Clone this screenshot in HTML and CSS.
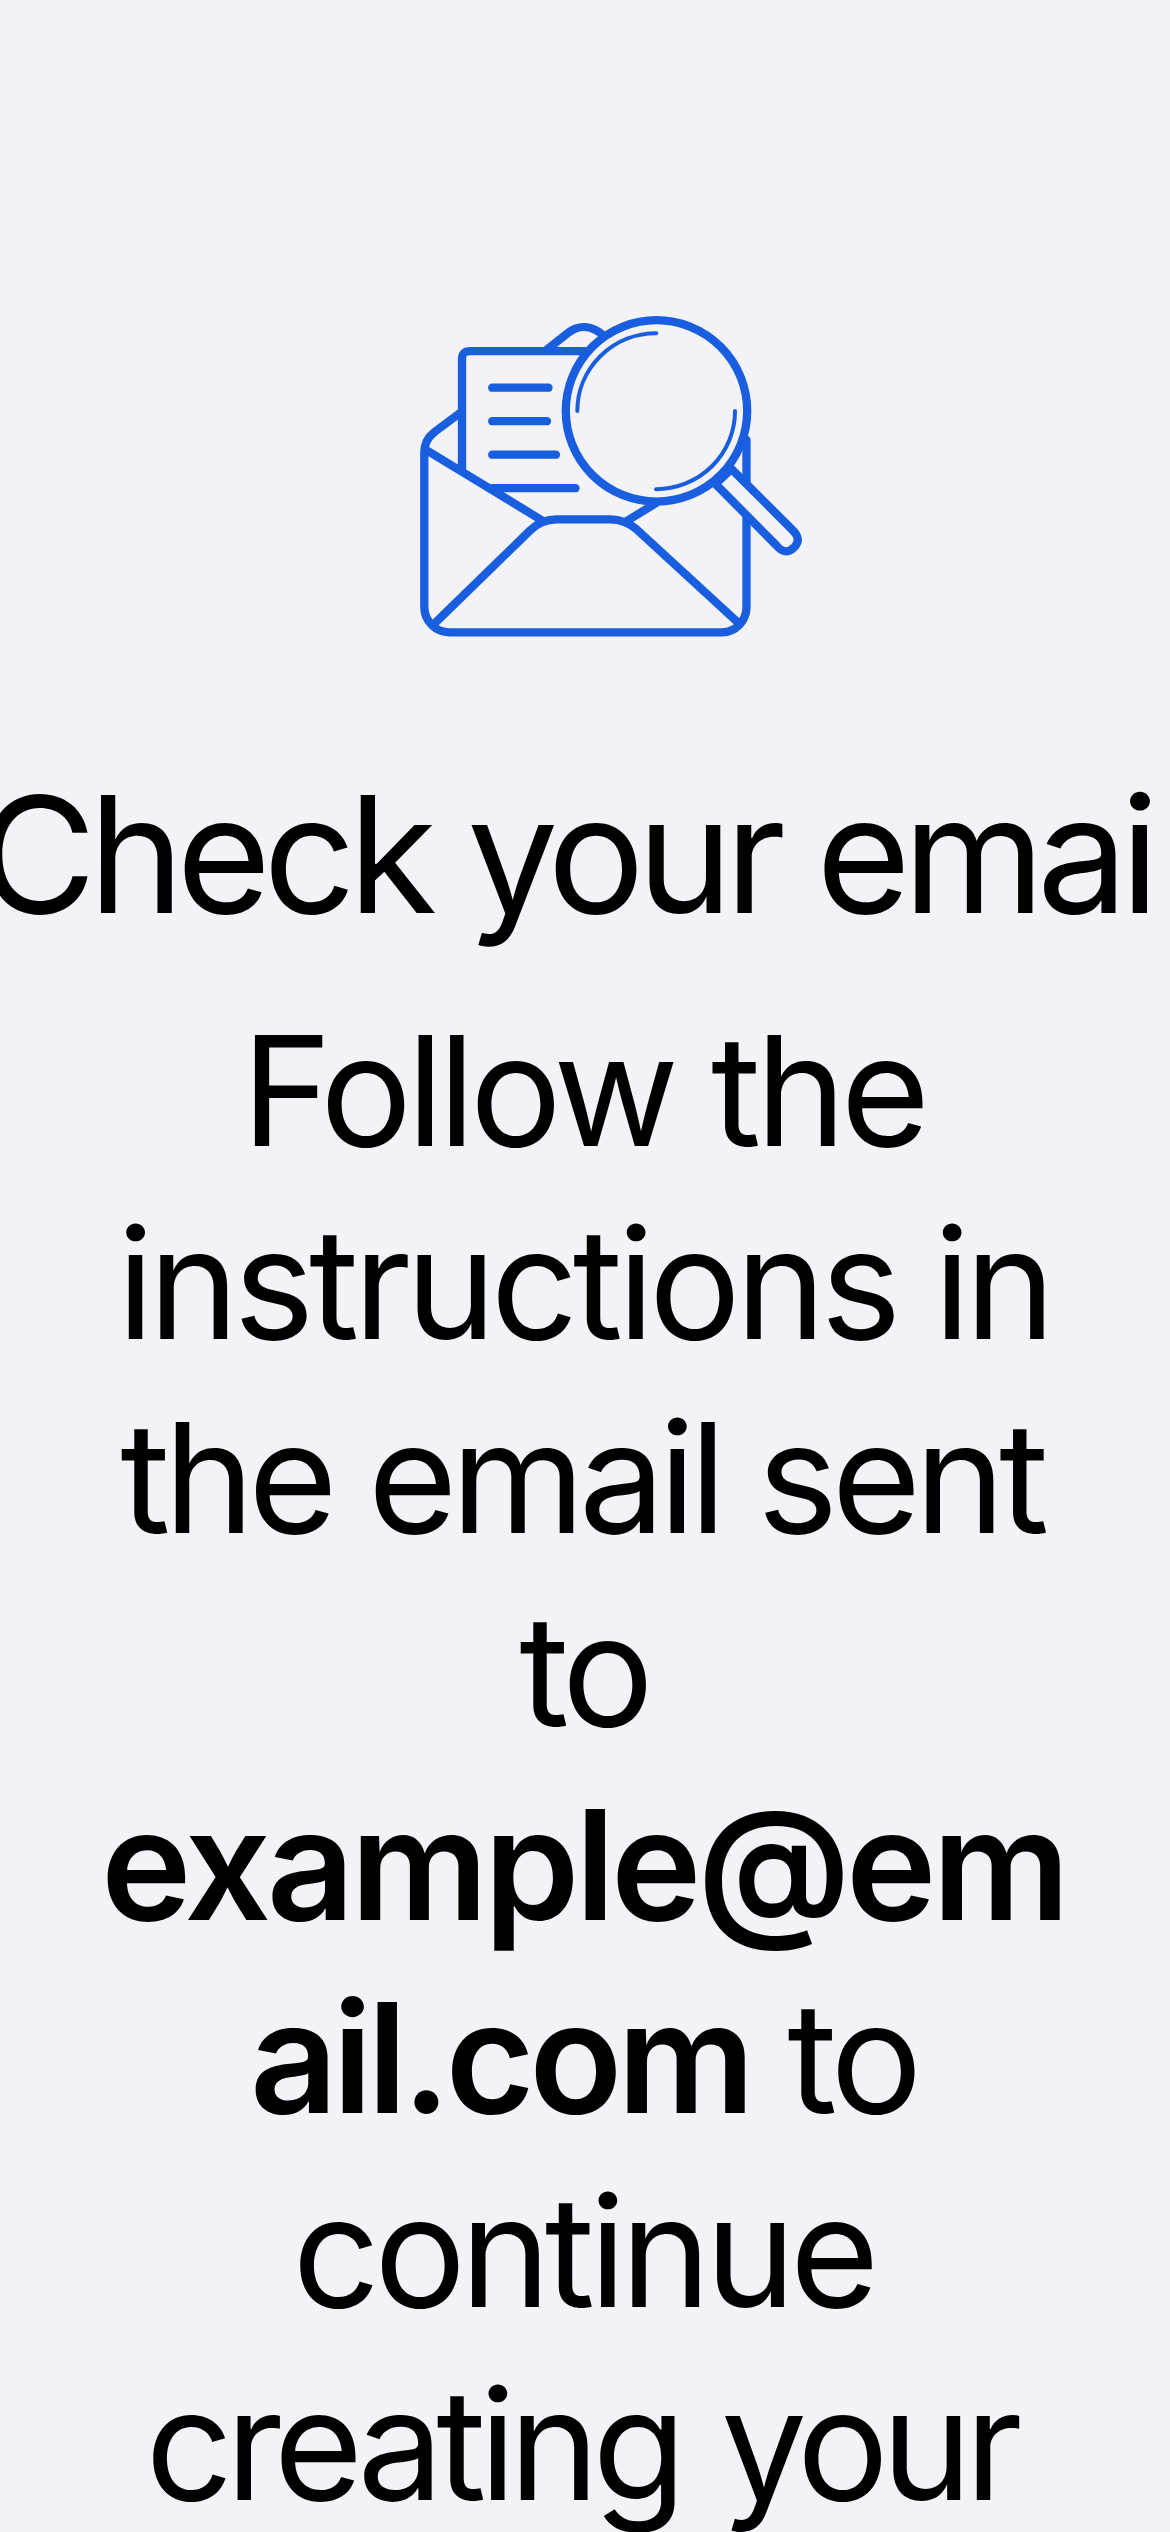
FILE: index.html
```
<!DOCTYPE html>
<html lang="en">
<head>
<meta charset="utf-8">
<title>Check your email</title>
<link rel="stylesheet" href="styles.css">
</head>
<body>
<main class="screen">
  <svg class="illustration" viewBox="365 300 440 350" aria-hidden="true">
    <g class="stroke">
      <!-- envelope body -->
      <path d="M462 411.500L434.500 432Q424.300 440 424.300 452V607A25.200 25.300 0 0 0 449.500 632.300H722A24.500 25.300 0 0 0 746.500 607V440"/>
      <path d="M547 349.500L568.500 332.500C579 324.500 592 325 604 336"/>
      <path class="butt" d="M427 450.500L543 521M626 521.500L657 502.500"/>
      <path d="M433 625L530 530.500Q541 519.300 556.700 519.300H610Q625 519.300 637 529.700L738.500 623"/>
      <!-- letter -->
      <path class="butt" d="M462 472V359Q462 351.200 470 351.200H590"/>
      <path d="M492.200 387.700H548.500M492.200 421.200H547M492.200 454.700H556M492 488.200H575.500"/>
      <!-- magnifying glass -->
      <path class="fill butt" d="M715.500 484L776.500 545.500Q785 556 794 547.500Q802 539.500 793 530.500L731.500 469Z"/>
      <circle class="fill" cx="656.500" cy="410.900" r="90.700"/>
      <path class="thin" d="M577.300 411A79 78 0 0 1 656.300 333.200M735 411A79 78 0 0 1 656 489.200"/>
    </g>
  </svg>
  <h1 class="title">Check your ema<span class="loose">i</span>l</h1>
  <p class="message">
    <span class="line follow">Follow the</span>
    <span class="line instructions">instructions in</span>
    <span class="line sent">the email sent</span>
    <span class="line to">to</span>
    <strong class="line address">example@em</strong>
    <span class="line domain"><strong>ail.com</strong> to</span>
    <span class="line continue">continue</span>
    <span class="line creating">creating your</span>
  </p>
</main>
</body>
</html>
```
FILE: styles.css
```
body {
  margin: 0;
  background: #f2f2f7;
  color: #000;
  font-family: Inter, "Liberation Sans", sans-serif;
}

.screen {
  display: flex;
  flex-direction: column;
  align-items: center;
  box-sizing: border-box;
  height: 2532px;
  padding-top: 300px;
  overflow: hidden;
}

.illustration {
  flex: none;
  width: 440px;
  height: 350px;
}

.stroke {
  fill: none;
  stroke: #185ede;
  stroke-width: 8.3;
  stroke-linecap: round;
  stroke-linejoin: round;
}

.butt { stroke-linecap: butt; }
.fill { fill: #f2f2f7; }
.thin { stroke-width: 4; }

.title {
  flex: none;
  margin: 104px 0 0;
  padding-left: 7px;
  font-size: 162px;
  font-weight: 445;
  line-height: 200px;
  letter-spacing: -7.7px;
  white-space: nowrap;
}

.loose { letter-spacing: 8px; }

.message {
  flex: none;
  margin: 39.6px 0 0;
  font-size: 153px;
  font-weight: 445;
  line-height: 193.55px;
  text-align: center;
  white-space: nowrap;
}

.line { display: block; }
strong { font-weight: 610; }

.follow { letter-spacing: -5.4px; padding-right: 4px; }
.instructions { letter-spacing: -5.4px; padding-right: 3px; }
.sent { letter-spacing: -6.2px; padding-right: 7px; }
.to { letter-spacing: -6px; padding-right: 3px; }
.address { letter-spacing: -4.2px; padding-right: 3px; }
.domain { letter-spacing: -5.3px; padding-right: 3px; }
.continue { letter-spacing: -5.7px; padding-right: 4px; }
.creating { letter-spacing: -7.1px; word-spacing: 6px; padding-right: 9px; }
```
